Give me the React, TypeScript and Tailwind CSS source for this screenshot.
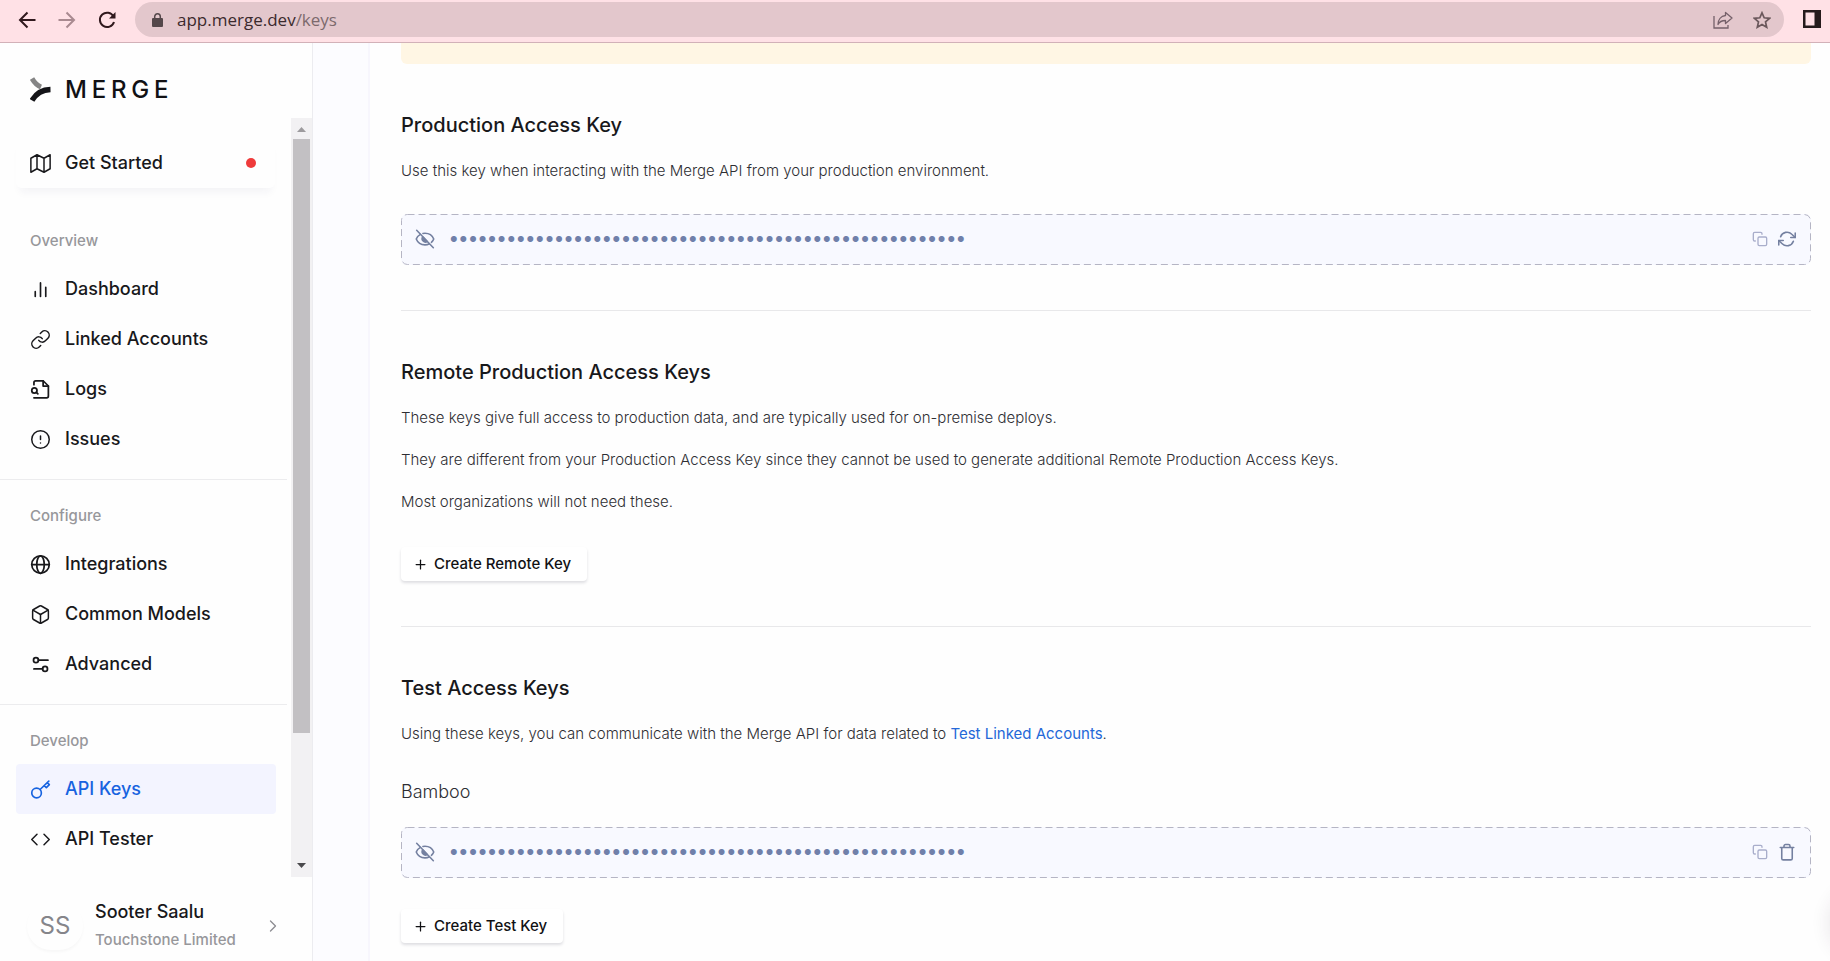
import type { ReactNode } from 'react';
import {
  Box as BoxIcon,
  ChevronRight as ChevronRightIcon,
  CircleAlert as CircleAlertIcon,
  Code as CodeIcon,
  Link as LinkIcon,
  Plus as PlusIcon
} from 'lucide-react';

type IconProps = { className?: string };

function Svg({ className, children, width = 1.7 }: { className?: string; children: ReactNode; width?: number }) {
  return (
    <svg
      viewBox="0 0 24 24"
      fill="none"
      stroke="currentColor"
      strokeWidth={width}
      strokeLinecap="round"
      strokeLinejoin="round"
      aria-hidden="true"
      className={className}>
      {children}
    </svg>);
}

const MapIcon = ({ className }: IconProps) =>
<Svg className={className}>
    <path d="M1 6v16l7-4 8 4 7-4V2l-7 4-8-4zM8 2v16M16 6v16" />
  </Svg>;

const BarsIcon = ({ className }: IconProps) =>
<Svg className={className} width={1.9}>
    <path d="M6 20v-5.500M12 20V4.500M18 20V9.500" />
  </Svg>;

const LogsIcon = ({ className }: IconProps) =>
<Svg className={className} width={2}>
    <path d="M4.500 6.500V4a2 2 0 0 1 2-2H15l6 6v11.500a2 2 0 0 1-2 2H4.500" />
    <path d="M15 2v6h6" />
    <circle cx="5" cy="13" r="3" />
    <path d="M7.300 15.300 9 17" />
  </Svg>;

const GlobeIcon = ({ className }: IconProps) =>
<Svg className={className} width={2}>
    <circle cx="12" cy="12" r="10" />
    <ellipse cx="12" cy="12" rx="4.300" ry="10" />
    <path d="M2 12h20" />
  </Svg>;

const SlidersIcon = ({ className }: IconProps) =>
<Svg className={className} width={2}>
    <circle cx="6.800" cy="7" r="2.800" />
    <path d="M9.600 7H20.500" />
    <circle cx="17.200" cy="17" r="2.800" />
    <path d="M14.400 17H4.500" />
  </Svg>;

const KeyIcon = ({ className }: IconProps) =>
<Svg className={className} width={1.9}>
    <circle cx="7.500" cy="16" r="5.500" />
    <path d="M11.500 12 21.500 2.500M16.300 7.500l2.400 2.400 3.400-3.400-2.400-2.400" />
  </Svg>;

const EyeOffIcon = ({ className }: IconProps) =>
<Svg className={className} width={1.9}>
    <path d="M2 1.500 22 22.500" />
    <path d="M6.500 6.500C3.800 8 2.200 10.200 1.500 12c1.600 4 5.500 7 10.500 7 2 0 3.800-.5 5.300-1.300" />
    <path d="M9.500 5.300c.8-.2 1.600-.3 2.500-.3 5 0 8.900 3 10.500 7-.6 1.500-1.500 2.800-2.800 4" />
    <path d="M9.200 9.500a4 4 0 0 0 5.500 5.500z" fill="currentColor" />
  </Svg>;

const CopyIcon = ({ className }: IconProps) =>
<Svg className={className} width={2}>
    <rect x="9" y="9" width="13" height="13" rx="2" />
    <path d="M5 15H4a2 2 0 0 1-2-2V4a2 2 0 0 1 2-2h9a2 2 0 0 1 2 2v1" />
  </Svg>;

const RefreshIcon = ({ className }: IconProps) =>
<Svg className={className} width={2.1}>
    <path d="M23 4v6h-6" />
    <path d="M1 20v-6h6" />
    <path d="M3.500 9a9 9 0 0 1 14.900-3.400L23 10M1 14l4.600 4.400A9 9 0 0 0 20.500 15" />
  </Svg>;

const TrashIcon = ({ className }: IconProps) =>
<Svg className={className} width={2.1}>
    <path d="M3 6h18M5 6v14.500a2 2 0 0 0 2 2h10a2 2 0 0 0 2-2V6M8 5.500V4a2 2 0 0 1 2-2h4a2 2 0 0 1 2 2v1.500" />
  </Svg>;

const navSections = [
{
  title: 'Overview',
  items: [
  { label: 'Dashboard', icon: BarsIcon },
  { label: 'Linked Accounts', icon: LinkIcon },
  { label: 'Logs', icon: LogsIcon },
  { label: 'Issues', icon: CircleAlertIcon }]
},
{
  title: 'Configure',
  items: [
  { label: 'Integrations', icon: GlobeIcon },
  { label: 'Common Models', icon: BoxIcon },
  { label: 'Advanced', icon: SlidersIcon }]
},
{
  title: 'Develop',
  items: [
  { label: 'API Keys', icon: KeyIcon, active: true },
  { label: 'API Tester', icon: CodeIcon }]
}];

function BrowserBar() {
  return (
    <header className="flex h-[43px] shrink-0 items-start border-b border-[#d2b1b8] bg-[#ffe1e6] pt-[2px] text-[#30191d]">
      <div className="flex h-[35px] w-[135px] shrink-0 items-center gap-[22px] pl-[18px]">
        <button type="button" aria-label="Back">
          <svg viewBox="0 0 18 18" className="h-[18px] w-[18px]" fill="none" stroke="currentColor" strokeWidth="2">
            <path d="M17.500 9H2.500M9.500 1.500 2 9l7.500 7.500" />
          </svg>
        </button>
        <button type="button" aria-label="Forward" className="text-[#a98a90]">
          <svg viewBox="0 0 18 18" className="h-[18px] w-[18px]" fill="none" stroke="currentColor" strokeWidth="2">
            <path d="M.5 9h15M8.500 1.500 16 9l-7.500 7.500" />
          </svg>
        </button>
        <button type="button" aria-label="Reload">
          <svg viewBox="0 0 18 18" className="h-[18px] w-[18px]" fill="none" stroke="currentColor" strokeWidth="2">
            <path d="M15.500 5.500A7.200 7.200 0 1 0 16 11" />
            <path d="M17.500 1v6.500H11z" fill="currentColor" stroke="none" />
          </svg>
        </button>
      </div>
      <div className="flex h-[35px] flex-1 items-center rounded-full bg-[#e3c7cc] pl-[17px] pr-[13px]">
        <svg viewBox="0 0 11 14" className="h-[14px] w-[11px]" fill="none">
          <rect x="0" y="5" width="11" height="9" rx="1" fill="#54474a" />
          <path d="M2.700 5.500V3.600a2.800 2.800 0 0 1 5.600 0v1.900" stroke="#54474a" strokeWidth="1.500" />
        </svg>
        <span className="ml-[14px] flex-1 font-['Open_Sans','Noto_Sans',sans-serif] text-[17px] leading-6 text-[#3b2a2d]">
          app.merge.dev<span className="text-[#7c6a6d]">/keys</span>
        </span>
        <button type="button" aria-label="Share this page">
          <svg viewBox="0 0 20 18" className="h-[18px] w-[20px] text-[#75616a]" fill="none" stroke="currentColor" strokeWidth="1.300">
            <path d="M1 5v12h14v-3" />
            <path d="M12.500 1.500 19 7l-6.500 5.500V9.500C9 9.500 6.500 10.500 5 13.500c0-5 3-8.500 7.500-9z" strokeLinejoin="round" />
          </svg>
        </button>
        <button type="button" aria-label="Bookmark this page" className="ml-[20px]">
          <svg viewBox="0 0 18 18" className="h-[18px] w-[18px] text-[#6b585c]" fill="none" stroke="currentColor" strokeWidth="1.700">
            <path d="m9 1.800 2.200 5 5.400.5-4.100 3.600 1.200 5.300L9 13.400l-4.700 2.800 1.200-5.300L1.400 7.300l5.400-.5z" />
          </svg>
        </button>
      </div>
      <button type="button" aria-label="Side panel" className="ml-[19px] mr-[9px] mt-[8px]">
        <svg viewBox="0 0 18 18" className="h-[18px] w-[18px]">
          <path d="M0 0h18v18H0zM2.500 2.500v13H11.500v-13z" fill="#251b1c" fillRule="evenodd" />
        </svg>
      </button>
    </header>);
}

function Logo() {
  return (
    <div className="flex h-[75px] shrink-0 items-center pl-[30px] pt-[18px]">
      <svg viewBox="0 0 21 25" className="h-[25px] w-[21px]" fill="none" aria-hidden="true">
        <path d="M2 1.500c2 3.500 4.800 6.800 9 8.500" stroke="#858585" strokeWidth="5" />
        <path d="M2 23.500C6 16.500 11.500 12.700 20.500 12.500" stroke="#141418" strokeWidth="5.400" />
      </svg>
      <span className="ml-[14px] text-[24px] font-medium leading-7 tracking-[0.2em] text-[#111114]">
        MERGE
      </span>
    </div>);
}

function Sidebar() {
  return (
    <aside className="flex w-[313px] shrink-0 flex-col border-r border-[#ececf0] bg-[#fefefe]">
      <Logo />
      <div className="flex min-h-0 flex-1">
        <nav className="min-w-0 flex-1 overflow-hidden text-[18px] font-medium leading-6 text-[#18181b]">
          <a href="#get-started" className="mx-4 mt-5 flex h-[50px] items-center gap-[14px] rounded-md pl-[14px] pr-[19px] shadow-[0_8px_8px_-4px_rgba(40,40,90,0.05)]">
            <MapIcon className="h-[21px] w-[21px]" />
            <span className="flex-1">Get Started</span>
            <span className="h-[10px] w-[10px] rounded-full bg-[#ef3b3b]" />
          </a>
          <div className="h-[33px]" />
          {navSections.map((section, index) =>
          <div key={section.title} className={index > 0 ? 'mr-1 mt-[15px] border-t border-[#ececee] pt-4' : 'mr-1'}>
              <p className="flex h-10 items-center pl-[30px] text-[15px] text-[#97979b]">{section.title}</p>
              <div className="mt-[3px] pl-4 pr-[11px]">
                {section.items.map((item) =>
              <a
                key={item.label}
                href="#"
                aria-current={'active' in item ? 'page' : undefined}
                className={
                'active' in item ?
                'flex h-[50px] items-center gap-[14px] rounded bg-[#f3f4ff] pl-[14px] text-[#1763e0]' :
                'flex h-[50px] items-center gap-[14px] rounded pl-[14px]'
                }>
                    <item.icon className="h-[21px] w-[21px] shrink-0" strokeWidth={1.7} />
                    {item.label}
                  </a>
              )}
              </div>
            </div>
          )}
        </nav>
        <div className="flex w-[21px] shrink-0 flex-col items-center bg-[#f2f1f3]">
          <svg viewBox="0 0 9 5" className="mb-[7px] mt-[9px] h-[5px] w-[9px]">
            <path d="M0 5 4.500 0 9 5z" fill="#9d9b9e" />
          </svg>
          <div className="w-[17px] flex-1 bg-[#c2c0c3]" />
          <div className="h-[130px]" />
          <svg viewBox="0 0 9 5" className="mb-[9px] h-[5px] w-[9px]">
            <path d="M0 0h9L4.500 5z" fill="#4a494c" />
          </svg>
        </div>
      </div>
      <button type="button" className="flex h-[84px] shrink-0 items-center pl-[27px] pr-9 pt-[13px] text-left">
        <span className="flex h-12 w-14 items-center justify-center rounded-full text-[24px] text-[#85858a] shadow-[0_2px_3px_rgba(0,0,0,0.03)]">
          SS
        </span>
        <span className="ml-3 flex-1">
          <span className="block text-[18px] font-medium leading-7 text-[#18181b]">Sooter Saalu</span>
          <span className="block text-[15px] font-medium leading-7 text-[#97979b]">Touchstone Limited</span>
        </span>
        <ChevronRightIcon className="-mr-[7px] h-5 w-5 text-[#8d8d92]" strokeWidth={1.6} />
      </button>
    </aside>);
}

function KeyField({ label, action }: { label: string; action: 'refresh' | 'trash' }) {
  return (
    <div className="relative flex h-[51px] items-center rounded-md bg-[#f8f9ff] pb-px pl-[14px] pr-[15px] text-[#7480a0]">
      {/* long dashes, which border-dashed cannot give at 1px */}
      <svg className="pointer-events-none absolute inset-0 h-full w-full text-[#b5b5c4]" aria-hidden="true">
        <rect
          x="0.500"
          y="0.500"
          rx="6"
          className="h-[calc(100%-1px)] w-[calc(100%-1px)]"
          fill="none"
          stroke="currentColor"
          strokeDasharray="7 4" />
      </svg>
      <button type="button" aria-label={`Show ${label}`}>
        <EyeOffIcon className="h-5 w-5" />
      </button>
      <span aria-label={label} className="ml-[14px] flex-1 overflow-hidden whitespace-nowrap text-[19px] font-semibold leading-6 text-[#7080aa]">
        {'•'.repeat(54)}
      </span>
      <button type="button" aria-label={`Copy ${label}`} className="text-[#a9aecb]">
        <CopyIcon className="h-4 w-4" />
      </button>
      <button type="button" aria-label={action === 'trash' ? `Delete ${label}` : `Regenerate ${label}`} className="ml-[10px]">
        {action === 'trash' ? <TrashIcon className="h-[18px] w-[18px]" /> : <RefreshIcon className="h-[18px] w-[18px]" />}
      </button>
    </div>);
}

function SectionTitle({ children }: { children: ReactNode }) {
  return <h2 className="mb-5 text-[20px] font-medium leading-7 text-[#18181b]">{children}</h2>;
}

function CreateButton({ children }: { children: ReactNode }) {
  return (
    <button
      type="button"
      className="flex h-[34px] items-center gap-[6px] rounded bg-white pl-3 pr-4 text-[15px] font-medium text-[#111114] shadow-[0_2px_3px_rgba(30,30,60,0.14)]">
      <PlusIcon className="h-[15px] w-[15px]" strokeWidth={2} />
      {children}
    </button>);
}

export default function App() {
  return (
    <div className="flex h-screen flex-col overflow-hidden bg-[#fefefe] font-[Inter,sans-serif]">
      <BrowserBar />
      <div className="flex min-h-0 flex-1">
        <Sidebar />
        <main className="min-w-0 flex-1 overflow-hidden bg-[#fcfcff] pl-[55px]">
          <div className="min-h-full border-l-2 border-[#f7f6fd] bg-[#fefefe] pl-[31px] pr-[19px] text-[15px] font-light leading-6 text-[#2e2e33]">
            <div className="h-[21px] rounded-b-md bg-[#fff6e4]" />

            <section className="pb-[45px] pt-[47px]">
              <SectionTitle>Production Access Key</SectionTitle>
              <p className="mb-[31px]">Use this key when interacting with the Merge API from your production environment.</p>
              <KeyField label="production access key" action="refresh" />
            </section>

            <section className="border-t border-[#e8e8ea] pb-[45px] pt-[47px]">
              <SectionTitle>Remote Production Access Keys</SectionTitle>
              <div className="mb-[33px] space-y-[18px]">
                <p>These keys give full access to production data, and are typically used for on-premise deploys.</p>
                <p>They are different from your Production Access Key since they cannot be used to generate additional Remote Production Access Keys.</p>
                <p>Most organizations will not need these.</p>
              </div>
              <CreateButton>Create Remote Key</CreateButton>
            </section>

            <section className="border-t border-[#e8e8ea] pt-[47px]">
              <SectionTitle>Test Access Keys</SectionTitle>
              <p className="mb-8">
                Using these keys, you can communicate with the Merge API for data related to{' '}
                <a href="#test-linked-accounts" className="font-normal text-[#2468d8]">Test Linked Accounts</a>.
              </p>
              <h3 className="mb-[21px] text-[18px] leading-7">Bamboo</h3>
              <KeyField label="Bamboo test key" action="trash" />
              <div className="mt-[31px]">
                <CreateButton>Create Test Key</CreateButton>
              </div>
            </section>
          </div>
        </main>
      </div>
      <div className="fixed -right-[68px] bottom-1 h-[68px] w-[68px] rounded-full shadow-[0_0_20px_rgba(60,30,60,0.12)]" />
    </div>);
}
